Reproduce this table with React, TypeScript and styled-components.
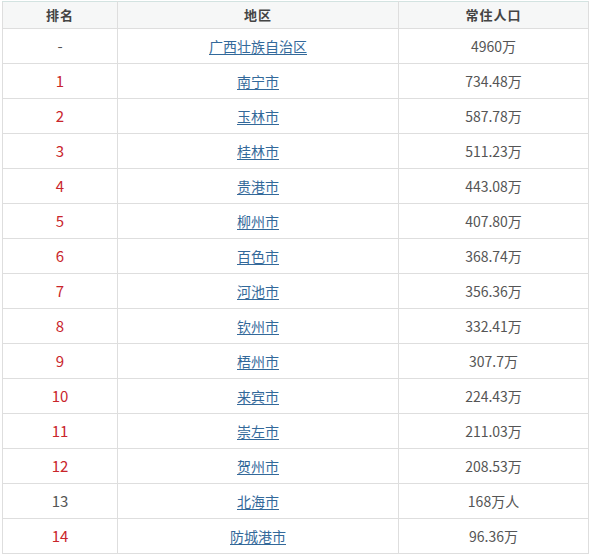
import React from 'react'
import styled, { createGlobalStyle } from 'styled-components'

const GlobalStyle = createGlobalStyle`
  body {
    margin: 0;
    background: #fff;
    font-family: "Noto Sans CJK SC", "Noto Sans", sans-serif;
  }
`

const Wrapper = styled.div`
  padding: 1px 1px 0 2px;
`
const Table = styled.table`
  width: 586px;
  border-collapse: collapse;
  table-layout: fixed;
  border: 1px solid #dcdcdc;
  border-top-color: #d3e3e1;
`
const HeadCell = styled.th`
  height: 26px;
  padding: 0;
  background: #f6f7f7;
  border: 1px solid #dedede;
  border-top-color: #d3e3e1;
  color: #444;
  font-size: 13px;
  font-weight: bold;
  letter-spacing: 1px;
  text-align: center;
  line-height: 26px;
`
const Cell = styled.td<{ $red?: boolean; $rank?: boolean }>`
  height: 34px;
  padding: 0;
  border: 1px solid #dedede;
  color: ${p => (p.$red ? '#c9252b' : '#555')};
  font-size: ${p => (p.$rank ? '15px' : '14px')};
  text-align: center;
  vertical-align: middle;
  line-height: 20px;
`
const Link = styled.a`
  color: #33699a;
  text-decoration: underline;
  text-underline-offset: 2px;
`

const rows = [
  { rank: '-', name: '广西壮族自治区', pop: '4960万', red: false },
  { rank: '1', name: '南宁市', pop: '734.48万', red: true },
  { rank: '2', name: '玉林市', pop: '587.78万', red: true },
  { rank: '3', name: '桂林市', pop: '511.23万', red: true },
  { rank: '4', name: '贵港市', pop: '443.08万', red: true },
  { rank: '5', name: '柳州市', pop: '407.80万', red: true },
  { rank: '6', name: '百色市', pop: '368.74万', red: true },
  { rank: '7', name: '河池市', pop: '356.36万', red: true },
  { rank: '8', name: '钦州市', pop: '332.41万', red: true },
  { rank: '9', name: '梧州市', pop: '307.7万', red: true },
  { rank: '10', name: '来宾市', pop: '224.43万', red: true },
  { rank: '11', name: '崇左市', pop: '211.03万', red: true },
  { rank: '12', name: '贺州市', pop: '208.53万', red: true },
  { rank: '13', name: '北海市', pop: '168万人', red: false },
  { rank: '14', name: '防城港市', pop: '96.36万', red: true },
]

export default function App() {
  return (
    <Wrapper>
      <GlobalStyle />
      <Table>
        <colgroup>
          <col style={{ width: 115 }} />
          <col style={{ width: 281 }} />
          <col style={{ width: 190 }} />
        </colgroup>
        <thead>
          <tr>
            <HeadCell>排名</HeadCell>
            <HeadCell>地区</HeadCell>
            <HeadCell>常住人口</HeadCell>
          </tr>
        </thead>
        <tbody>
          {rows.map(row => (
            <tr key={row.name}>
              <Cell $rank $red={row.red}>{row.rank}</Cell>
              <Cell>
                <Link href="#">{row.name}</Link>
              </Cell>
              <Cell>{row.pop}</Cell>
            </tr>
          ))}
        </tbody>
      </Table>
    </Wrapper>
  )
}
